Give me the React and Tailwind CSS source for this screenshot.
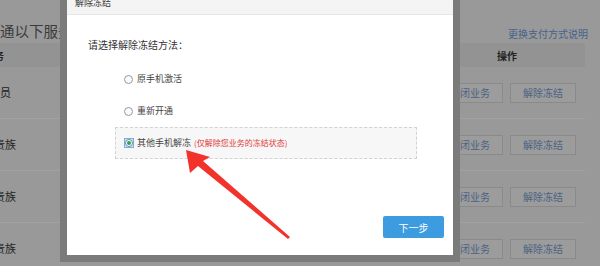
import React from "react";

const rows = [
  { label: "会员", shift: "-ml-[11px]" },
  { label: "贵族", shift: "-ml-[6px]" },
  { label: "贵族", shift: "-ml-[6px]" },
  { label: "贵族", shift: "-ml-[6px]" },
];

const Radio = ({ checked }) =>
  checked ? (
    <span className="w-[10px] h-[10px] flex items-center justify-center bg-[#cfe3f5] border border-[#7aaede]">
      <span className="w-[8px] h-[8px] rounded-full bg-white border border-[#6f8fa8] flex items-center justify-center">
        <span className="w-[4px] h-[4px] rounded-full bg-[#3aa04a]" />
      </span>
    </span>
  ) : (
    <span className="w-[9px] h-[9px] rounded-full bg-[#fafafa] border border-[#8f9aa6]" />
  );

const App = () => {
  return (
    <div className="relative w-[600px] h-[266px] overflow-hidden bg-[#999999] font-['Noto_Sans_CJK_SC',sans-serif]">
      {/* page behind the overlay */}
      <div className="w-[585px] flex flex-col">
        <div className="flex items-end justify-between h-[40px]">
          <span className="text-[14.5px] leading-[18px] text-[#3a3a3a]">通以下服务</span>
          <span className="text-[10px] leading-[14px] text-[#45628c] -mb-[1px] -mr-[3px]">更换支付方式说明</span>
        </div>
        <div className="mt-[3px] h-[24px] bg-[#939393] flex items-center">
          <span className="flex-1 -ml-[6px] text-[10px] font-bold text-[#222]">务</span>
          <span className="w-[148px] pl-[60px] text-[10px] font-bold text-[#222]">操作</span>
        </div>
        {rows.map((r, i) => (
          <div key={i} className="h-[52px] flex items-center border-b border-[#a1a1a1]">
            <span className={`flex-1 text-[11px] text-[#222] ${r.shift}`}>{r.label}</span>
            <div className="w-[148px] flex gap-[7px]">
              <span className="w-[66px] h-[20px] flex items-center justify-center border border-[#8a8a8a] bg-[#9c9c9c] text-[10px] text-[#4a6383]">
                关闭业务
              </span>
              <span className="w-[66px] h-[20px] flex items-center justify-center border border-[#8a8a8a] bg-[#9c9c9c] text-[10px] text-[#4a6383]">
                解除冻结
              </span>
            </div>
          </div>
        ))}
      </div>

      {/* modal */}
      <div className="absolute left-[60px] top-[-15px] w-[400px] h-[277px] border-[7px] border-[#7b7b7b]">
        <div className="w-full h-full bg-white flex flex-col">
          <div className="h-[23px] bg-[#f4f4f4] border-b border-[#e6e6e6] flex items-center justify-between pl-[8px] pr-[7px]">
            <span className="text-[9px] text-[#333]">解除冻结</span>
            <svg width="10" height="10" viewBox="0 0 10 10" className="-mt-[14px]">
              <path d="M1 1 L9 9 M9 1 L1 9" stroke="#b5b5b5" strokeWidth="1" fill="none" />
            </svg>
          </div>
          <div className="pl-[21px] pt-[23px] text-[10px] leading-[14px] text-[#333]">请选择解除冻结方法：</div>
          <div className="flex flex-col mt-[20px]">
            <label className="pl-[57px] h-[14px] flex items-center gap-[4px] text-[9px] text-[#444]">
              <Radio />
              原手机激活
            </label>
            <label className="pl-[57px] mt-[18px] h-[14px] flex items-center gap-[4px] text-[9px] text-[#444]">
              <Radio />
              重新开通
            </label>
            <div className="ml-[48px] mt-[9px] w-[302px] h-[32px] bg-[#f7f7f7] border border-dashed border-[#d2d2d2] pl-[8px] flex items-center gap-[3px] text-[9px] text-[#444]">
              <Radio checked />
              <span>其他手机解冻</span>
              <span className="text-[8px] text-[#e03b3b]">(仅解除您业务的冻结状态)</span>
            </div>
          </div>
          <div className="flex justify-end pr-[9px] mt-[57px]">
            <button className="w-[61px] h-[22px] rounded-[2px] bg-[#3d9be0] text-white text-[10px]">下一步</button>
          </div>
        </div>
      </div>

      {/* red arrow annotation */}
      <svg className="absolute left-0 top-0 pointer-events-none" width="600" height="266" viewBox="0 0 600 266">
        <polygon
          points="186,150 190,173 198,166 288,239 290,237 203,161 210,157"
          fill="#f2332c"
        />
      </svg>
    </div>
  );
};

export default App;
